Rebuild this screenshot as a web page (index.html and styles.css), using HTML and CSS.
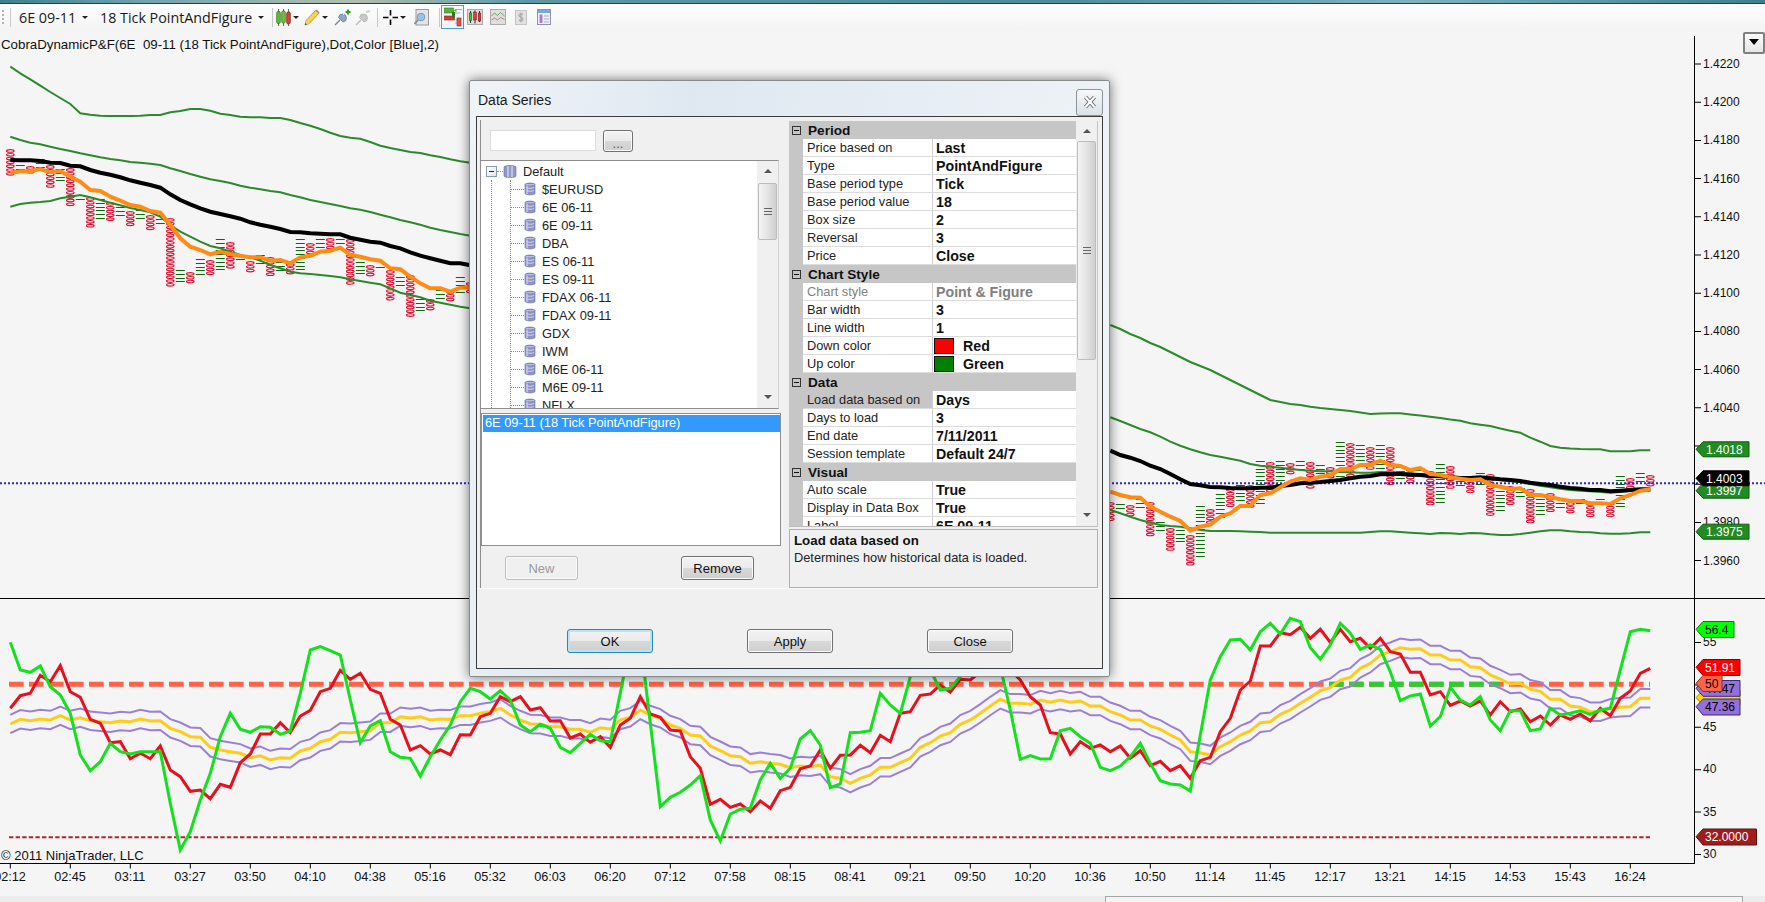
FILE: index.html
```html
<!DOCTYPE html>
<html lang="en">
<head>
<meta charset="utf-8">
<title>Data Series</title>
<link rel="stylesheet" href="styles.css">
</head>
<body>
<svg class="defs" width="0" height="0" aria-hidden="true">
  <symbol id="db" viewBox="0 0 12 14">
    <path d="M1 2.5C1 .6 11 .6 11 2.5v9c0 1.9-10 1.9-10 0z" fill="#8d92c8" stroke="#6a6f9e" stroke-width=".6"/>
    <path d="M1 2.5c0 1.6 10 1.6 10 0" fill="#e4e6f6" stroke="#6a6f9e" stroke-width=".6"/>
    <path d="M2 5.5c2 1 6 1 8 0M2 8.5c2 1 6 1 8 0" fill="none" stroke="#dfe1f3" stroke-width=".8"/>
    <path d="M2 3.5h2v8.5H2z" fill="#c9cce8" opacity=".7"/>
  </symbol>
</svg>

<div class="glass"></div>

<header class="toolbar">
  <span class="grip"></span>
  <span class="sep sep-first"></span>
  <span class="tb-label tb-instrument">6E 09-11</span><span class="caret"></span>
  <span class="tb-label tb-period">18 Tick PointAndFigure</span><span class="caret"></span>
  <span class="sep"></span>
  <svg class="ic ic-candle" viewBox="0 0 15 17"><path d="M2.5 0v17M7.5 0v17M12.5 0v17" stroke="#444" stroke-width=".8"/><rect x=".7" y="2.5" width="3.6" height="12" rx="1.4" fill="#5cc23a" stroke="#2c6b1c" stroke-width=".7"/><rect x="5.7" y="2" width="3.6" height="12" rx="1.4" fill="#7cbf3c" stroke="#2c6b1c" stroke-width=".7"/><rect x="10.7" y="3" width="3.6" height="12" rx="1.4" fill="#d8433c" stroke="#7a1d18" stroke-width=".7"/></svg><span class="caret caret-tight"></span>
  <svg class="ic ic-pencil" viewBox="0 0 16 17"><path d="M1 16l1.2-4.6L11.6 1.4l3.2 3-9.4 10z" fill="#f4d64a" stroke="#a88a20" stroke-width=".8"/><path d="M1 16l1.2-4.6 3.2 3z" fill="#e9c9a0"/><path d="M1 16l.5-2 1.4 1.4z" fill="#333"/><path d="M11.6 1.4l3.2 3 .9-1-3.2-3z" fill="#d8776a"/></svg><span class="caret caret-tight"></span>
  <svg class="ic ic-pin" viewBox="0 0 17 17"><path d="M1 16l5-5" stroke="#7a8694" stroke-width="1.4"/><path d="M4.5 8.5a4 4 0 1 1 4.5 4.5z" fill="#8fa9c4" stroke="#60768e" stroke-width=".7"/><path d="M9 6l2-2" stroke="#dfe8f2"/><path d="M11.5 3h5M14 .5v5" stroke="#27a51f" stroke-width="2"/></svg>
  <svg class="ic ic-pin2" viewBox="0 0 16 17"><path d="M1 16l5-5" stroke="#bdbdbd" stroke-width="1.4"/><path d="M4.5 8.5a4 4 0 1 1 4.5 4.5z" fill="#c9c9c9" stroke="#aaa" stroke-width=".7"/><path d="M11 3l4-1" stroke="#cfcfcf" stroke-width="2"/></svg>
  <span class="sep sep-b"></span>
  <svg class="ic ic-cross" viewBox="0 0 15 15"><path d="M7.5 0v5.5M7.5 9.5V15M0 7.5h5.5M9.500 7.500H15" stroke="#000" stroke-width="1.600"/></svg><span class="caret caret-tight"></span>
  <svg class="ic ic-zoom" viewBox="0 0 15 17"><rect x="2" y=".5" width="12.500" height="15.500" fill="#e4e4e4" stroke="#9a9a9a"/><circle cx="7" cy="8" r="3.800" fill="#9cc2e2" stroke="#7a9ab4"/><path d="M4 11l-3.500 4" stroke="#7d8a96" stroke-width="1.600"/></svg>
  <span class="sep sep-c"></span>
  <span class="ic-active"><svg class="ic-in" viewBox="0 0 18 20"><path d="M11 2.500h7M11 6h5M11 13h3M11 16h3" stroke="#b9a4d8"/><rect x=".5" y="1" width="9" height="5" fill="#57b33a" stroke="#2f7a1e" stroke-width=".6"/><path d="M9.500 3.500l3-1.500v3z" fill="#57b33a"/><rect x=".5" y="9" width="10" height="4" fill="#d63a34" stroke="#8a1d18" stroke-width=".6"/><rect x="13" y="11" width="4" height="8" fill="#d8574e" stroke="#8a1d18" stroke-width=".6"/><rect x="8" y="5" width="3" height="6" fill="#2f7a1e"/></svg></span>
  <svg class="ic ic-b" viewBox="0 0 16 16"><rect x=".5" y=".5" width="15" height="15" fill="#dcdcdc" stroke="#aaa"/><path d="M3.500 2v12M8 1.500v13M12.500 2v11" stroke="#333"/><rect x="2.200" y="4" width="2.600" height="7.500" fill="#4fb534" stroke="#235a16" stroke-width=".5"/><rect x="6.700" y="3" width="2.600" height="8" fill="#d63a34" stroke="#6a1612" stroke-width=".5"/><rect x="11.200" y="4" width="2.600" height="8" fill="#d63a34" stroke="#6a1612" stroke-width=".5"/></svg>
  <svg class="ic ic-c" viewBox="0 0 16 16"><rect x=".5" y=".5" width="15" height="15" fill="#dedede" stroke="#aaa"/><path d="M1.500 7l3-3 3 2.500 3-3 4 3.500" fill="none" stroke="#6aa86a"/><path d="M1.500 11l3-2 3 2 3-2.500 4 2" fill="none" stroke="#d27a7a"/></svg>
  <svg class="ic ic-d" viewBox="0 0 12 15"><rect x=".5" y=".5" width="11" height="14" fill="#e2e2e2" stroke="#c4c4c4"/><path d="M8 4.500C7 3.500 4 3.500 4 5.500s4 1.500 4 3.500-3 2-4 1M6 2.500v10" fill="none" stroke="#a8a8a8" stroke-width="1.200"/></svg>
  <svg class="ic ic-e" viewBox="0 0 14 16"><rect x=".5" y=".5" width="13" height="15" fill="#f0f0f6" stroke="#8e8fa8"/><rect x="1" y="1" width="12" height="3" fill="#7ba8d4"/><rect x="2.500" y="5.500" width="3" height="8.500" fill="#a77fd2"/><path d="M7 7h5M7 10h5M7 13h5" stroke="#a9a9c0"/></svg>
</header>

<main class="workspace">
  <p class="legend">CobraDynamicP&amp;F(6E  09-11 (18 Tick PointAndFigure),Dot,Color [Blue],2)</p>
  <button class="corner-btn" type="button"><span class="corner-tri"></span></button>

  <svg class="chart" viewBox="0 30 1765 866">
    <path id="figO" class="fig-o"/>
    <path id="figX" class="fig-x"/>

    <line class="last-price" x1="0" y1="483.300" x2="1765" y2="483.300"/>
    <line class="ref50" x1="9" y1="684.300" x2="1650" y2="684.300"/>
    <line class="ref50 ref50-g" x1="1329" y1="684.300" x2="1500" y2="684.300"/>
    <line class="ref32" x1="9" y1="837.300" x2="1650" y2="837.300"/>

    <g id="series"></g>

    <line class="axis" x1="1694.500" y1="36" x2="1694.500" y2="863.500"/>
    <line class="axis" x1="0" y1="598.500" x2="1765" y2="598.500"/>
    <line class="axis" x1="0" y1="863.500" x2="1695" y2="863.500"/>
    <line class="tick tick-p" x1="1698" y1="63.500" x2="1698" y2="570"/>
    <line class="tick tick-i" x1="1698" y1="642" x2="1698" y2="860"/>
    <line class="tick tick-t" x1="9.800" y1="866" x2="1640" y2="866"/>

    <g class="axis-y">
      <text x="1703" y="68">1.4220</text><text x="1703" y="106">1.4200</text><text x="1703" y="144">1.4180</text>
      <text x="1703" y="183">1.4160</text><text x="1703" y="221">1.4140</text><text x="1703" y="259">1.4120</text>
      <text x="1703" y="297">1.4100</text><text x="1703" y="335">1.4080</text><text x="1703" y="374">1.4060</text>
      <text x="1703" y="412">1.4040</text>
      <text x="1703" y="526">1.3980</text><text x="1703" y="565">1.3960</text>
      <text x="1703" y="646">55</text><text x="1703" y="731">45</text>
      <text x="1703" y="773">40</text><text x="1703" y="816">35</text><text x="1703" y="858">30</text>
    </g>
    <g class="axis-x">
      <text x="10" y="881">02:12</text><text x="70" y="881">02:45</text><text x="130" y="881">03:11</text><text x="190" y="881">03:27</text>
      <text x="250" y="881">03:50</text><text x="310" y="881">04:10</text><text x="370" y="881">04:38</text><text x="430" y="881">05:16</text>
      <text x="490" y="881">05:32</text><text x="550" y="881">06:03</text><text x="610" y="881">06:20</text><text x="670" y="881">07:12</text>
      <text x="730" y="881">07:58</text><text x="790" y="881">08:15</text><text x="850" y="881">08:41</text><text x="910" y="881">09:21</text>
      <text x="970" y="881">09:50</text><text x="1030" y="881">10:20</text><text x="1090" y="881">10:36</text><text x="1150" y="881">10:50</text>
      <text x="1210" y="881">11:14</text><text x="1270" y="881">11:45</text><text x="1330" y="881">12:17</text><text x="1390" y="881">13:21</text>
      <text x="1450" y="881">14:15</text><text x="1510" y="881">14:53</text><text x="1570" y="881">15:43</text><text x="1630" y="881">16:24</text>
    </g>
    <text class="copyright" x="1" y="860">© 2011 NinjaTrader, LLC</text>

    <g class="badge">
      <polygon class="b-forest" points="1696,449.300 1703,441.800 1749,441.800 1749,456.800 1703,456.800"/><text class="t-w" x="1706" y="454">1.4018</text>
      <polygon class="b-forest" points="1696,490.700 1703,483.200 1749,483.200 1749,498.200 1703,498.200"/><text class="t-w" x="1706" y="495">1.3997</text>
      <polygon class="b-black" points="1696,478.300 1703,470.800 1749,470.800 1749,485.800 1703,485.800"/><text class="t-w" x="1706" y="483">1.4003</text>
      <polygon class="b-forest" points="1696,531.700 1703,524.200 1749,524.200 1749,539.200 1703,539.200"/><text class="t-w" x="1706" y="536">1.3975</text>

      <polygon class="b-lime" points="1696,629.300 1703,621.500 1734,621.500 1734,637.500 1703,637.500"/><text class="t-k" x="1705" y="634">56.4</text>
      <polygon class="b-red" points="1696,667.300 1703,659.500 1740,659.500 1740,675.500 1703,675.500"/><text class="t-w" x="1705" y="672">51.91</text>
      <polygon class="b-gold" points="1696,697.700 1703,690 1740,690 1740,705 1703,705"/>
      <polygon class="b-purple" points="1696,688.300 1703,680.500 1740,680.500 1740,696.300 1703,696.300"/><text class="t-k" x="1705" y="693">47.47</text>
      <polygon class="b-purple" points="1696,706.700 1703,699 1740,699 1740,715 1703,715"/><text class="t-k" x="1705" y="711">47.36</text>
      <polygon class="b-tomato" points="1696,683.300 1703,675.500 1722,675.500 1722,691.500 1703,691.500"/><text class="t-k" x="1705" y="688">50</text>
      <polygon class="b-brick" points="1696,836.700 1703,829 1756.500,829 1756.500,845 1703,845"/><text class="t-w" x="1705" y="841">32.0000</text>
    </g>
  </svg>

  <section class="dialog">
    <div class="titlebar">
      <span class="title">Data Series</span>
      <span class="close-x"><svg viewBox="0 0 14 14"><path d="M2.500 2l9 10M11.500 2l-9 10" stroke="#666" stroke-width="4" fill="none"/><path d="M2.500 2l9 10M11.500 2l-9 10" stroke="#fff" stroke-width="2.200" fill="none"/></svg></span>
    </div>
    <div class="frame">
      <div class="panes">
        <div class="left-pane">
          <div class="search-row">
            <span class="search-input"></span>
            <button class="btn btn-dots" type="button">...</button>
          </div>
          <div class="tree-box">
            <div class="tree">
              <div class="tree-root">
                <span class="expander"></span><span class="stub stub-root"></span>
                <svg class="root-icon" viewBox="0 0 14 14"><path d="M1 3c0-2 12-2 12 0v9c0 2-12 2-12 0z" fill="#9398cc" stroke="#666b9b" stroke-width=".6"/><path d="M5 2v11M9 2v11" stroke="#e9eaf6"/></svg>
                <span>Default</span>
              </div>
              <div class="guide-a"><ul class="guide-b">
                <li><span class="stub"></span><svg class="leaf"><use href="#db"/></svg>$EURUSD</li>
                <li><span class="stub"></span><svg class="leaf"><use href="#db"/></svg>6E 06-11</li>
                <li><span class="stub"></span><svg class="leaf"><use href="#db"/></svg>6E 09-11</li>
                <li><span class="stub"></span><svg class="leaf"><use href="#db"/></svg>DBA</li>
                <li><span class="stub"></span><svg class="leaf"><use href="#db"/></svg>ES 06-11</li>
                <li><span class="stub"></span><svg class="leaf"><use href="#db"/></svg>ES 09-11</li>
                <li><span class="stub"></span><svg class="leaf"><use href="#db"/></svg>FDAX 06-11</li>
                <li><span class="stub"></span><svg class="leaf"><use href="#db"/></svg>FDAX 09-11</li>
                <li><span class="stub"></span><svg class="leaf"><use href="#db"/></svg>GDX</li>
                <li><span class="stub"></span><svg class="leaf"><use href="#db"/></svg>IWM</li>
                <li><span class="stub"></span><svg class="leaf"><use href="#db"/></svg>M6E 06-11</li>
                <li><span class="stub"></span><svg class="leaf"><use href="#db"/></svg>M6E 09-11</li>
                <li><span class="stub"></span><svg class="leaf"><use href="#db"/></svg>NFLX</li>
              </ul></div>
            </div>
            <div class="scrollbar sb-tree">
              <span class="tri tri-up"></span>
              <span class="thumb"><span class="grips"></span></span>
              <span class="tri tri-down"></span>
            </div>
          </div>
          <div class="series-list"><div class="series-item">6E 09-11 (18 Tick PointAndFigure)</div></div>
          <div class="list-actions">
            <button class="btn btn-list" type="button" disabled>New</button>
            <button class="btn btn-list" type="button">Remove</button>
          </div>
        </div>

        <div class="right-pane">
          <div class="grid-box">
            <div class="props">
              <div class="cat"><span class="minus"></span>Period</div>
              <div class="row"><span class="k">Price based on</span><span class="v">Last</span></div>
              <div class="row"><span class="k">Type</span><span class="v">PointAndFigure</span></div>
              <div class="row"><span class="k">Base period type</span><span class="v">Tick</span></div>
              <div class="row"><span class="k">Base period value</span><span class="v">18</span></div>
              <div class="row"><span class="k">Box size</span><span class="v">2</span></div>
              <div class="row"><span class="k">Reversal</span><span class="v">3</span></div>
              <div class="row"><span class="k">Price</span><span class="v">Close</span></div>
              <div class="cat"><span class="minus"></span>Chart Style</div>
              <div class="row row-off"><span class="k">Chart style</span><span class="v">Point &amp; Figure</span></div>
              <div class="row"><span class="k">Bar width</span><span class="v">3</span></div>
              <div class="row"><span class="k">Line width</span><span class="v">1</span></div>
              <div class="row"><span class="k">Down color</span><span class="v v-color"><i class="swatch sw-red"></i>Red</span></div>
              <div class="row"><span class="k">Up color</span><span class="v v-color"><i class="swatch sw-green"></i>Green</span></div>
              <div class="cat"><span class="minus"></span>Data</div>
              <div class="row row-sel"><span class="k">Load data based on</span><span class="v">Days</span></div>
              <div class="row"><span class="k">Days to load</span><span class="v">3</span></div>
              <div class="row"><span class="k">End date</span><span class="v">7/11/2011</span></div>
              <div class="row"><span class="k">Session template</span><span class="v">Default 24/7</span></div>
              <div class="cat"><span class="minus"></span>Visual</div>
              <div class="row"><span class="k">Auto scale</span><span class="v">True</span></div>
              <div class="row"><span class="k">Display in Data Box</span><span class="v">True</span></div>
              <div class="row"><span class="k">Label</span><span class="v">6E 09-11</span></div>
            </div>
            <div class="scrollbar sb-grid">
              <span class="tri tri-up"></span>
              <span class="thumb"><span class="grips"></span></span>
              <span class="tri tri-down"></span>
            </div>
          </div>
          <div class="help-box">
            <strong>Load data based on</strong>
            <span>Determines how historical data is loaded.</span>
          </div>
        </div>
      </div>
      <div class="dialog-actions">
        <button class="btn btn-main btn-default" type="button">OK</button>
        <button class="btn btn-main" type="button">Apply</button>
        <button class="btn btn-main" type="button">Close</button>
      </div>
    </div>
  </section>
</main>

<footer class="statusband"><span class="hscroll"></span></footer>
<script src="chart.js"></script>
</body>
</html>
```

FILE: styles.css
```css
* { box-sizing: border-box; }
html, body { margin: 0; padding: 0; }
body {
  width: 1765px; height: 902px; overflow: hidden;
  display: flex; flex-direction: column;
  background: #f5f5f5; color: #111;
  font-family: "Liberation Sans", Arial, sans-serif;
}
.defs { position: absolute; }

.glass {
  height: 4px; flex: none;
  background: linear-gradient(90deg, #3f7f8d 0%, #6fa3ad 8%, #b3bfae 20%, #5d97a5 30%, #4e8c9c 60%, #7fb2bf 80%, #3f7f8d 100%);
  border-bottom: 1px solid #27414c;
}
.toolbar {
  height: 26px; flex: none;
  display: flex; align-items: center;
  background: linear-gradient(#fdfdfd, #f4f4f4);
  font-family: "Open Sans", sans-serif; font-size: 14.300px; color: #1a1a1a;
}
.grip { width: 3px; height: 14px; margin-left: 2px; border-left: 2px dotted #b4b4b4; }
.sep { width: 1px; height: 19px; background: #c9c9c9; margin: 0 2px 0 5px; }
.sep-first { margin: 0 8px 0 5px; }
.sep-b { margin: 0 5px 0 6px; }
.sep-c { margin: 0 1px 0 10px; }
.tb-label { white-space: nowrap; }
.tb-instrument { width: 63px; }
.tb-period { margin-left: 9px; width: 158px; }
.caret { width: 0; height: 0; border: 3px solid transparent; border-top: 3px solid #222; border-bottom: 0; margin-right: 3px; }
.caret-tight { margin: 0 0 0 2px; }
.ic { flex: none; display: block; }
.ic-candle { width: 15px; height: 17px; margin-left: 1px; }
.ic-pencil { width: 16px; height: 17px; margin-left: 5px; }
.ic-pin { width: 17px; height: 17px; margin-left: 6px; }
.ic-pin2 { width: 16px; height: 17px; margin-left: 4px; }
.ic-cross { width: 15px; height: 15px; }
.ic-zoom { width: 15px; height: 17px; margin-left: 8px; }
.ic-active {
  width: 23px; height: 24px; display: flex; align-items: center; justify-content: center;
  border: 1px solid #4e9ad6; background: #f2f7fb;
}
.ic-in { width: 18px; height: 20px; }
.ic-b { width: 16px; height: 16px; margin-left: 3px; }
.ic-c { width: 16px; height: 16px; margin-left: 7px; }
.ic-d { width: 12px; height: 15px; margin-left: 9px; }
.ic-e { width: 14px; height: 16px; margin-left: 10px; }

.workspace { position: relative; height: 866px; flex: none; }
.chart { display: block; width: 1765px; height: 866px; }
.legend {
  position: absolute; left: 1px; top: 7px; margin: 0;
  font-size: 13.300px; line-height: 16px; white-space: pre; color: #111;
}
.corner-btn {
  position: absolute; left: 1743px; top: 2px; width: 22px; height: 22px; padding: 0;
  border: 2px solid #808080; border-radius: 2px;
  background: linear-gradient(#fafafa, #e6e6e6);
  display: flex; align-items: flex-start; justify-content: center;
}
.corner-tri { margin-top: 5px; border: 5px solid transparent; border-top: 6px solid #000; border-bottom: 0; }

/* chart strokes */
.fig-o { fill: none; stroke: #e01032; stroke-width: 1.100; }
.fig-x { fill: none; stroke: #0b6b0b; stroke-width: 1; }
.last-price { stroke: #2a2ad0; stroke-width: 2; stroke-dasharray: 2 2; }
.ref50 { stroke: #ff6347; stroke-width: 5; stroke-dasharray: 14.600 5.400; }
.ref50-g { stroke: #2ecc32; stroke-dashoffset: 0; }
.ref32 { stroke: #a52a3a; stroke-width: 2; stroke-dasharray: 4.400 2.200; }
.s-band { fill: none; stroke: #2c8a2c; stroke-width: 2; }
.s-black { fill: none; stroke: #000; stroke-width: 4; }
.s-orange { fill: none; stroke: #ff8c14; stroke-width: 4; }
.s-purple { fill: none; stroke: #9a80d8; stroke-width: 2; }
.s-yellow { fill: none; stroke: #ffcc1c; stroke-width: 3; }
.s-red { fill: none; stroke: #e8101c; stroke-width: 3; }
.s-green { fill: none; stroke: #14e01e; stroke-width: 3; }
.axis { stroke: #000; stroke-width: 1; }
.tick { fill: none; stroke: #000; }
.tick-p { stroke-width: 6; stroke-dasharray: 1 37.200; }
.tick-i { stroke-width: 6; stroke-dasharray: 1 41.400; }
.tick-t { stroke-width: 5; stroke-dasharray: 1 59; }
.axis-y text, .axis-x text, .copyright, .badge text {
  font-family: "Liberation Sans", Arial, sans-serif; font-size: 12px; fill: #111;
}
.axis-x text { text-anchor: middle; font-size: 12.700px; }
.copyright { font-size: 13px; }
.badge polygon { stroke-width: 1; }
.badge .t-w { fill: #fff; }
.badge .t-k { fill: #000; }
.b-forest { fill: #228b22; stroke: #0f5c0f; }
.b-black { fill: #000; stroke: #000; }
.b-lime { fill: #00ff00; stroke: #0a7a0a; }
.b-red { fill: #ff0000; stroke: #8a0000; }
.b-gold { fill: #ffd700; stroke: #a58c00; }
.b-purple { fill: #9370db; stroke: #3b2a75; }
.b-tomato { fill: #ff6347; stroke: #8a3020; }
.b-brick { fill: #a01c1c; stroke: #5c1010; }

/* dialog */
.dialog {
  position: absolute; left: 469px; top: 50px; width: 641px; height: 597px;
  display: flex; flex-direction: column;
  padding: 0 6px 7px 6px;
  border: 1px solid #8a8a8a; border-radius: 2px;
  background: linear-gradient(100deg, #f0f4f8 0%, #dfe8f1 30%, #e6edf4 60%, #f2f5f8 100%);
  box-shadow: 0 0 12px rgba(0, 0, 0, .55);
}
.titlebar { height: 35px; flex: none; display: flex; align-items: center; justify-content: space-between; padding: 2px 0 0 2px; }
.title { font-size: 14px; color: #1a1a1a; }
.close-x {
  width: 27px; height: 27px; margin-top: 5px; display: flex; align-items: center; justify-content: center;
  border: 1px solid #8b949c; border-radius: 3px;
  background: linear-gradient(#f6f8fa, #dbe2e8);
}
.close-x svg { width: 14px; height: 14px; }
.frame {
  flex: 1; display: flex; flex-direction: column; min-height: 0;
  border: 1px solid #3c3c3c; background: #f0f0f0;
}
.panes { height: 472px; flex: none; display: flex; padding: 3px 6px 0 3px; border-bottom: 1px solid #fafafa; }
.left-pane { width: 301px; flex: none; display: flex; flex-direction: column; border-left: 1px solid #8e8e8e; }
.search-row { height: 40px; flex: none; display: flex; align-items: flex-start; padding: 10px 0 0 9px; gap: 7px; }
.search-input { width: 106px; height: 21px; background: #fff; border: 1px solid #dcdcdc; }
.btn {
  font-family: "Liberation Sans", Arial, sans-serif; font-size: 13px; color: #111; padding: 0;
  border: 1px solid #707070; border-radius: 3px;
  background: linear-gradient(#f3f3f3 0%, #ebebeb 48%, #d8d8d8 52%, #cfcfcf 100%);
  box-shadow: inset 0 0 0 1px #fbfbfb;
}
.btn:disabled { color: #9a9a9a; border-color: #bdbdbd; background: #f0f0f0; }
.btn-dots { width: 30px; height: 22px; color: #555; line-height: 26px; }
.tree-box {
  width: 298px; height: 249px; flex: none; display: flex; overflow: hidden;
  background: #fff; border-top: 1px solid #8e8e8e; border-bottom: 1px solid #8e8e8e; border-right: 1px solid #d4d4d4;
}
.tree { flex: 1; padding: 1px 0 0 5px; font-size: 12.800px; color: #222; overflow: hidden; }
.tree-root { height: 18px; display: flex; align-items: center; }
.expander {
  width: 11px; height: 11px; flex: none; border: 1px solid #8a9bb0; position: relative;
  background: linear-gradient(135deg, #fff, #dfe4ea);
}
.expander::after { content: ""; position: absolute; left: 2px; right: 2px; top: 4px; height: 1px; background: #223; }
.stub { width: 13px; flex: none; border-top: 1px dotted #888; height: 0; }
.stub-root { width: 6px; }
.root-icon { width: 14px; height: 14px; flex: none; margin-right: 6px; }
.guide-a { margin-left: 5px; border-left: 1px dotted #888; padding-left: 18px; }
.guide-b { list-style: none; margin: 0; padding: 0; border-left: 1px dotted #888; }
.guide-b li { height: 18px; display: flex; align-items: center; white-space: nowrap; }
.leaf { width: 12px; height: 14px; flex: none; margin-right: 6px; }
.scrollbar {
  flex: none; width: 21px; display: flex; flex-direction: column; align-items: center;
  background: #f0f0f0; position: relative;
}
.tri { width: 0; height: 0; border: 4px solid transparent; flex: none; }
.tri-up { border-bottom: 4px solid #555; border-top: 0; margin-top: 8px; }
.tri-down { border-top: 4px solid #555; border-bottom: 0; margin-top: auto; margin-bottom: 9px; }
.thumb {
  width: 19px; flex: none; display: flex; align-items: center; justify-content: center;
  border: 1px solid #bcbcbc; border-radius: 2px;
  background: linear-gradient(90deg, #f4f4f4, #e4e4e4 50%, #cfcfcf);
}
.grips { width: 8px; height: 7px; border-top: 1px solid #666; border-bottom: 1px solid #666; position: relative; }
.grips::after { content: ""; position: absolute; left: 0; right: 0; top: 2px; height: 1px; background: #666; }
.sb-tree .thumb { height: 57px; margin-top: 10px; }
.sb-grid .thumb { height: 219px; margin-top: 8px; }
.series-list { width: 300px; height: 133px; margin-top: 4px; flex: none; background: #fff; border: 1px solid #8e8e8e; padding: 1px 0 0 1px; }
.series-item { height: 17px; line-height: 16px; background: #3399ff; color: #fff; font-size: 12.800px; padding-left: 2px; width: 297px; }
.list-actions { display: flex; gap: 103px; padding: 10px 0 0 24px; }
.btn-list { width: 73px; height: 24px; }
.right-pane { width: 309px; margin-left: 8px; flex: none; display: flex; flex-direction: column; padding-top: 1px; }
.grid-box {
  height: 406px; flex: none; display: flex; overflow: hidden;
  background: #f0f0f0; border-bottom: 1px solid #bdbdbd; border-right: 1px solid #c4c4c4;
}
.props { width: 287px; flex: none; font-size: 12.800px; overflow: hidden; }
.cat { height: 18px; padding-top: 1px; background: #c6c6c6; font-size: 13.600px; font-weight: 700; display: flex; align-items: center; color: #111; }
.minus { width: 9px; height: 9px; margin: 0 7px 0 3px; flex: none; border: 1px solid #333; position: relative; }
.minus::after { content: ""; position: absolute; left: 1px; right: 1px; top: 3px; height: 1px; background: #111; }
.row { height: 18px; display: flex; margin-left: 14px; background: #fff; border-bottom: 1px solid #dcdcdc; line-height: 18px; box-shadow: -14px 0 0 #c6c6c6; color: #222; }
.k { width: 130px; flex: none; padding-left: 4px; border-right: 1px solid #cfcfcf; white-space: nowrap; overflow: hidden; }
.v { flex: 1; padding-left: 3px; font-size: 14.200px; font-weight: 700; color: #111; white-space: nowrap; }
.v-color { display: flex; align-items: center; padding-left: 1px; }
.swatch { width: 20px; height: 16px; margin-right: 9px; flex: none; border: 1px solid #111; }
.sw-red { background: #ff0000; }
.sw-green { background: #008000; }
.row-off .k, .row-off .v { color: #808080; }
.row-sel .k { background: #c6c6c6; }
.help-box {
  height: 59px; margin-top: 2px; flex: none; padding: 3px 4px; font-size: 12.800px; line-height: 16px;
  border: 1px solid #b0b0b0; display: flex; flex-direction: column; color: #222;
}
.help-box strong { color: #111; margin-bottom: 1px; font-size: 13.300px; }
.dialog-actions { display: flex; gap: 94px; padding: 40px 0 0 90px; }
.btn-main { width: 86px; height: 24px; font-size: 13px; }
.btn-default { border-color: #2f84b4; box-shadow: inset 0 0 0 2px #b9e3f6; }

.statusband { flex: 1; background: #ececec; padding-left: 1105px; }
.hscroll { display: block; width: 638px; height: 6px; border: 1px solid #a8a8a8; border-bottom: 0; background: #f4f4f4; }
```

FILE: chart.js
```js
// Price and indicator series, one value per bar. Bars sit 10px apart.
var X = function (i) { return 10.3 + 10 * i; };

var upperLeft = {
  top: [66.7,73.3,79.3,85.7,92,98,104,113.3,114.7,115.7,116,116,116,115.7,115,115,112.3,111,109,109,110.7,113.7,115,116.7,117.3,117.3,118,118,120,123,125.7,129,132.7,136,137.7,138.7,142,145.7,148,150,152,153,155.3,157,159.3,161.3,162.7],
  mid: [136.7,140,142.7,144.3,146.7,149,151,153.3,155.3,157.3,159,160.3,162,162.7,163.7,165,168.3,171,174,176.7,179.3,181,183,185.7,187.7,189.3,191,192.3,195,197.3,200,202,204,206,208.3,209.7,212,214.7,217.3,220,222.3,224.7,227.7,230,232,234,235.7],
  low: [206.7,204,202.7,202,201,198.3,196.7,195,197.3,200,202.7,205.3,208,210,212.3,216.7,225,231.7,236.7,241.7,246,248.3,251.7,255,257.3,260.7,265,268.3,271.7,273.3,274,275,276,277.3,279.3,281,282.7,284.3,288.3,292.7,295,297.3,300.7,302.7,304.7,306.7,308.3],
  black: [160,160.3,160.3,161,162.7,163,165.7,166.3,170,172.7,174.7,177.3,180.3,182.7,185,187.7,194.3,200,204.3,208.3,211.7,214,216.3,218.7,222.3,224.7,226.7,229,232,232.3,233.3,233.7,234.3,234.3,237.7,239.7,241.7,242.7,246,248.3,252.3,255.7,258.3,260.7,263.3,263.3,265.3],
  orange: [173,171.3,171.3,169,172.3,171,176.7,181.7,190,191,196.7,200.7,205,206.7,211,212.7,225,238.3,246.7,250,254.3,251.7,254,256,257.3,257.3,260.7,260,263.3,257.3,255.7,251.7,250.7,247.7,255,256.7,259.3,260.7,268.3,269.3,276.7,283.3,288.3,288.3,291.7,287.7,287.3]
};

var upperRight = {
  top: [325,329,334,338,343,347,352,357,362,366,370,375,380,385,390,395,400,402,404,405,406.7,408,409,410,411,412.5,414,413.5,413.3,413.3,414.5,415.5,416.7,418,419.5,420.7,423.3,424.7,426,428.5,430.7,432.7,437.7,441.7,446,447.7,448.5,449,449.2,449.3,451.3,451.3,451.3,450.3,450.3],
  mid: [417.3,421,425,429,432.3,436.7,441.7,445.7,449.3,452.3,455,456.7,458.7,460.7,464,465.7,466.7,467.7,469,470,470.7,471.3,471.3,472,472.3,472.7,472.7,472,472.3,472.7,473.3,474,475.3,476,476.7,477.3,478.3,479,479.3,480,481,482,484,485.7,487.3,488.7,490,490.7,491.3,492,492.7,492,491,490.7,490.7],
  low: [510,513.3,516.7,520,522.7,525,526,526.7,528.3,530,531,531,531,531.3,531.7,532,532.7,532.7,532.7,532.7,532.7,532.7,532.7,532.7,532.7,532.7,532,531.3,531.3,532,532.7,533.3,534,533,533.3,534,533,533.3,534.3,535,535,534,532.7,531.3,530.3,530.3,531.3,532,532.3,533.3,533.7,533.7,533.3,532.3,532.3],
  black: [450.7,455,457.7,461,465.7,469,474,479.3,484,485.3,487,487.3,488,488.3,488.3,487.7,487.7,486,485,483.3,482.7,482,481,480,478.3,476.7,476,474.3,474,474,474.7,475,476,476.3,477.3,478,478,477.3,478.3,479.3,480,481,482.7,484,485,486.7,488,488.7,490,490,491.3,490.7,490,489.3,489.3],
  orange: [491.7,495,497.3,497.7,506.7,511.7,516.7,521,530.7,526.7,524.7,516.7,513.3,506,506,495,493.3,487.3,481.7,478.3,480,476.7,475.3,469,469.3,465,465,460.7,465,466,470,468,474,475,477.3,478.7,480,479.3,485,486.7,489.3,488.3,495,495,497.3,499.3,501,501,503.3,503.3,504,498.3,495,490.7,489.3]
};

var rsi = [708.3,695.7,693.3,675.3,681.7,665.7,691.7,697.3,719.3,723.3,742.7,741.7,758.7,753.3,758.7,746,770,776.7,791.3,790,798.7,784.3,787.3,762.7,754,734,734,722.7,732.7,716,710.3,691.7,688.3,670.3,679.3,673.3,689.3,693.3,719.3,725,750,745.7,754,750,754.7,734.7,735,716.7,713.3,696.7,701.7,696.7,710,707.7,721,720.7,738,734,742.3,736.7,
  747.3,725,718.3,696.7,714,717.3,730,731,756.7,768.3,804.3,799.3,807.3,804,811.7,801,808.3,790.7,787.3,768.7,766,750,768.3,755.3,755,745.3,752.7,735.3,741.7,713.3,711.7,695.3,694,685,692.3,679.3,680,672,668,668,670,680,696.7,705,732.7,734,754,741.7,748.3,745,751.7,
  746,758.3,750.7,765.7,761.3,770.7,765.7,778.3,760.7,757.3,731.7,718.3,690,681,646,646,632.7,634.7,627.3,638.3,629.3,642.3,629.3,641.7,638.3,648.3,638.3,651.7,654,672.3,672.3,695,691.7,705.3,701,706,701,715,701.7,711.7,709,721.7,716,725,715,719.3,714,720.7,708.3,715.7,698.3,691,673.3,668.3];

var fast = [642.3,670,672.3,666,686.7,695,713.3,755,770.7,761.7,743.3,751.7,754,751.7,751.7,751.7,803.3,850,831.7,800,773.3,736.7,713.3,729.3,732.3,726.7,727.3,734.3,731,693.3,650,646.7,650.7,655,700,742.7,726,720.7,751.7,757.3,758.3,776,756.7,740,725,701.7,688.3,691.7,699,690.7,700,725,731.7,724.3,728.3,747.3,752.7,743.3,734.3,740.7,
  741.7,693,643,640,723,806.7,797.3,792.3,785,775.7,820,841,814,809.3,808.3,780,763.3,778.3,768.3,739,730.7,745,787.7,784,732.7,732.3,730.7,693.3,705,713.3,676.7,650,670,690,688.3,676.7,655,650,650,666.7,710,759.3,755.7,759,758.7,730.7,728.3,736.7,743.3,767.3,770.7,766,756.7,743.3,763.3,780.7,784,785,791,
  735,680,656.7,640,639.3,650,631.7,623.3,634,618.3,621.7,647.7,659,645,623.3,633.3,649.3,645,649.3,671.7,700.7,696,694,726,716.7,687.3,700,705,696.7,720,730.7,710.7,710.7,730.7,729,708.3,715,713.3,710.7,714.3,710,708.3,670,631.7,629.3,630.7];

var avg = [724,719.3,720.7,719,720,715.7,720,717.7,720.7,721.7,722.7,721,721.7,719,721,720.7,728.3,731.7,736.7,737.3,747.3,750,751.7,753.3,757.7,755.7,760,757.7,758.3,751,748.3,741.7,739.3,732.3,732.7,731.7,730.7,722.7,722.7,716.7,718,716.7,720,719,719.3,715.7,715.7,713.3,711.7,708.3,715,720,724,724.3,726.7,726.7,729.3,729.3,732.3,727.7,
  729,720,717.3,710,715,718.3,725,728.3,735,736,746,750.7,755.7,756.7,763.3,761.7,763.3,764.3,767.7,766,766.7,765,776.7,778.3,783.3,778.3,775,767.3,767.3,762.7,758.3,747.3,742.7,736,732.7,724.3,720,713.3,706,699.3,703.3,703.3,704.3,700,702.3,700,702.3,701,706,706,711.7,715,720,720,726,729.3,735,740,751.7,752.7,
  755,746.7,741.7,735,731,722.7,721.7,714.3,710,703.3,697.3,690.7,687.7,680,677.3,668.3,663.3,655,651.7,647.7,649.3,648.7,655,655,660,660,666.7,667.7,675,679,684,683.3,689.3,691.3,699.3,699.3,706,707.3,711.7,711.7,708.3,707.3,706.7,698.3,698.3];

// Point & figure boxes: bar index, top, bottom. Even bars are O columns, odd bars X columns.
var boxes = [
  [0,149,175],[1,163,172],[2,166,175],[3,157,168],[4,165,188],[5,167,182],[6,168,207],[7,193,200],[8,197,226],[9,197,220],[10,202,222],[11,205,217],[12,211,226],[13,208,220],[14,215,230],[15,213,223],[16,218,287],[17,268,282],[18,272,283],[19,257,277],[20,260,275],[21,237,270],[22,242,268],[23,257,262],[24,261,272],[25,253,265],[26,257,275],[27,260,272],[28,263,275],[29,237,270],[30,243,253],[31,237,248],[32,238,249],[33,237,246],[34,239,283],[35,260,275],[36,265,275],[37,265,269],[38,270,302],[39,275,287],[40,275,317],[41,297,312],[42,299,310],[43,288,300],[44,290,302],[45,275,295],[46,282,295],
  [110,502,520],[111,502,510],[112,505,515],[113,497,507],[114,502,538],[115,520,533],[116,528,551],[117,528,545],[118,535,566],[119,504,559],[120,509,526],[121,492,517],[122,488,506],[123,483,503],[124,485,507],[125,459,503],[126,462,493],[127,459,487],[128,463,474],[129,459,470],[130,462,488],[131,463,475],[132,467,478],[133,440,478],[134,443,478],[135,443,463],[136,447,469],[137,443,470],[138,447,486],[139,465,480],[140,468,482],[141,468,475],[142,471,507],[143,462,504],[144,466,488],[145,475,485],[146,478,493],[147,471,487],[148,474,516],[149,485,510],[150,486,505],[151,486,499],[152,489,524],[153,493,517],[154,493,512],[155,497,507],[156,502,512],[157,497,506],[158,502,516],[159,497,505],[160,502,516],[161,474,510],[162,478,489],[163,471,483],[164,475,486]
];

var BOX = 3.82;
var oPath = '', xPath = '';
boxes.forEach(function (c) {
  var cx = X(c[0]);
  for (var y = c[1] + BOX / 2; y < c[2]; y += BOX) {
    if (c[0] % 2 === 0) {
      oPath += 'M' + (cx - 3.8) + ' ' + y + 'a3.8 1.3 0 1 0 7.6 0a3.8 1.3 0 1 0-7.6 0';
    } else {
      xPath += 'M' + (cx - 4.5) + ' ' + Math.round(y) + '.5h9';
    }
  }
});
document.getElementById('figO').setAttribute('d', oPath);
document.getElementById('figX').setAttribute('d', xPath);

var host = document.getElementById('series');
function draw(cls, start, ys, shift) {
  var el = document.createElementNS('http://www.w3.org/2000/svg', 'polyline');
  el.setAttribute('class', cls);
  el.setAttribute('points', ys.map(function (y, k) {
    return X(start + k) + ',' + (y + (shift || 0));
  }).join(' '));
  host.appendChild(el);
}

[[0, upperLeft], [110, upperRight]].forEach(function (part) {
  draw('s-band', part[0], part[1].top);
  draw('s-band', part[0], part[1].mid);
  draw('s-band', part[0], part[1].low);
  draw('s-black', part[0], part[1].black);
  draw('s-orange', part[0], part[1].orange);
});

draw('s-purple', 0, avg, -9.2);
draw('s-purple', 0, avg, 9.2);
draw('s-yellow', 0, avg);
draw('s-red', 0, rsi);
draw('s-green', 0, fast);
```
